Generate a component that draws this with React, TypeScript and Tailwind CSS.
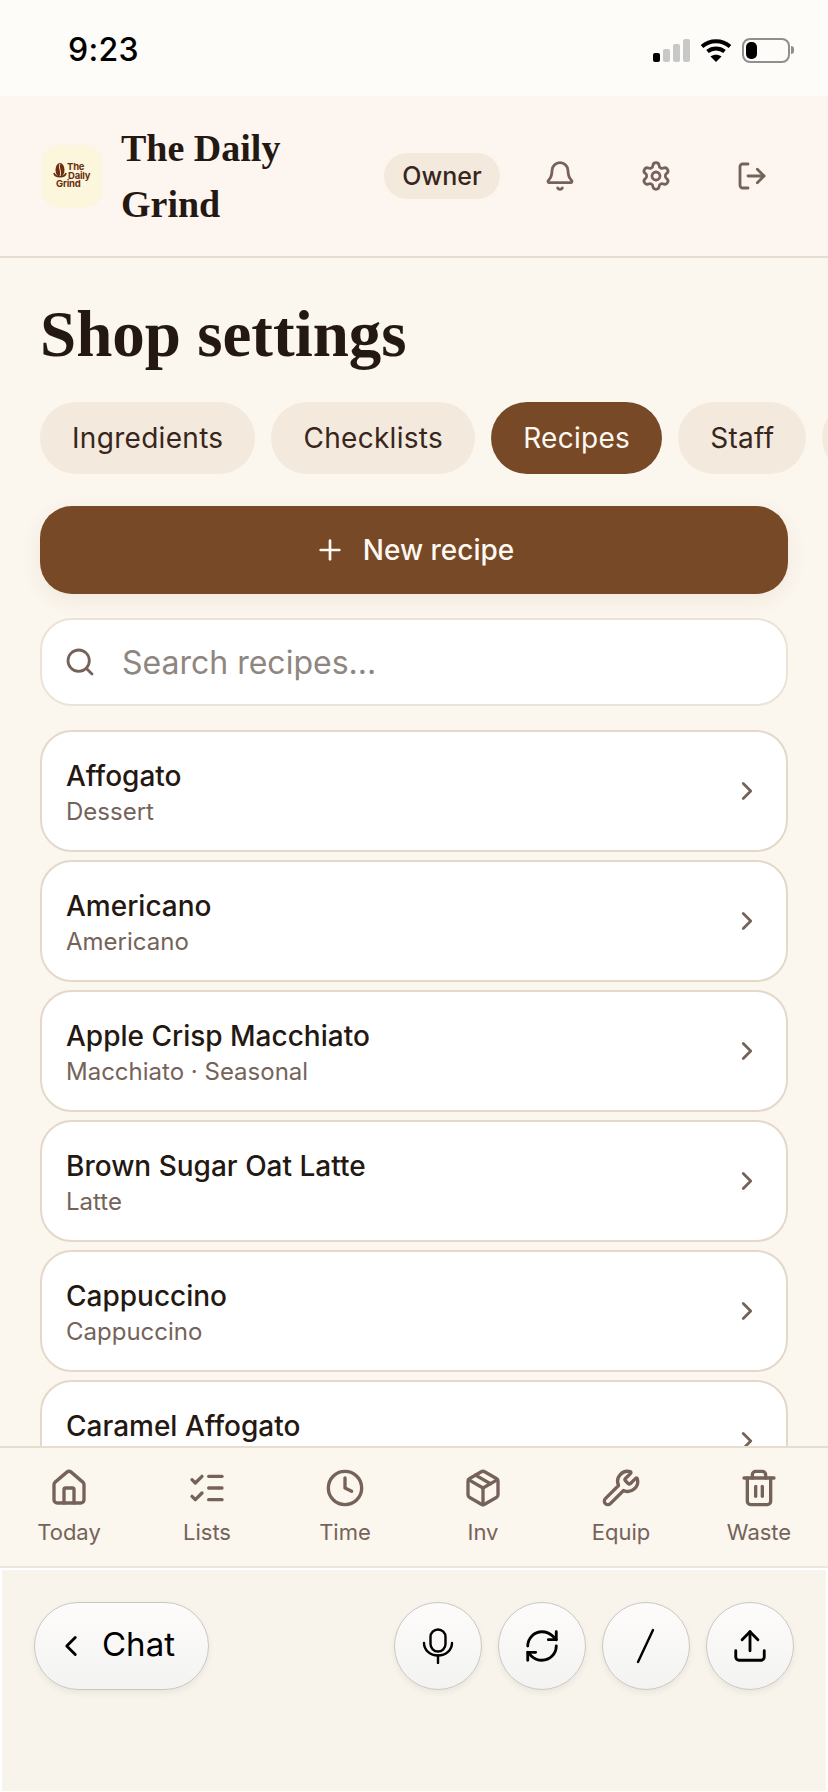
import {
  Bell,
  ChevronLeft,
  ChevronRight,
  Clock,
  House,
  ListChecks,
  LogOut,
  Package,
  Plus,
  RefreshCw,
  Search,
  Settings,
  Trash2,
  Upload,
  Wrench,
} from "lucide-react";

const tabs = ["Ingredients", "Checklists", "Recipes", "Staff"];

const recipes = [
  { name: "Affogato", sub: "Dessert" },
  { name: "Americano", sub: "Americano" },
  { name: "Apple Crisp Macchiato", sub: "Macchiato · Seasonal" },
  { name: "Brown Sugar Oat Latte", sub: "Latte" },
  { name: "Cappuccino", sub: "Cappuccino" },
  { name: "Caramel Affogato", sub: "" },
];

const navItems = [
  { label: "Today", icon: House },
  { label: "Lists", icon: ListChecks },
  { label: "Time", icon: Clock },
  { label: "Inv", icon: Package },
  { label: "Equip", icon: Wrench },
  { label: "Waste", icon: Trash2 },
];

const StatusIcons = () => (
  <div className="flex items-center gap-[10px]">
    {/* Signal */}
    <div className="flex items-end gap-[3px]">
      <div className="w-[7px] h-[9px] rounded-[2px] bg-black" />
      <div className="w-[7px] h-[13px] rounded-[2px] bg-[#c8c8c6]" />
      <div className="w-[7px] h-[18px] rounded-[2px] bg-[#c8c8c6]" />
      <div className="w-[7px] h-[23px] rounded-[2px] bg-[#c8c8c6]" />
    </div>
    {/* Wifi */}
    <svg width="32" height="24" viewBox="0 0 32 24" fill="none">
      <path d="M2 8.5C10 1.5 22 1.5 30 8.5" stroke="black" strokeWidth="4" />
      <path d="M7.5 13.5C12.5 9.5 19.5 9.5 24.5 13.5" stroke="black" strokeWidth="4" />
      <path d="M16 24L10.5 18.5C13.5 16 18.5 16 21.5 18.5Z" fill="black" />
    </svg>
    {/* Battery */}
    <div className="flex items-center gap-[1px]">
      <div className="w-[48px] h-[25px] rounded-[8px] border-2 border-[#8f8f8d] p-[2px]">
        <div className="w-[11px] h-full rounded-[5px] bg-black" />
      </div>
      <div className="w-[3px] h-[8px] rounded-r-full bg-[#8f8f8d]" />
    </div>
  </div>
);

const Logo = () => (
  <div className="w-[62px] h-[63px] shrink-0 rounded-[19px] bg-[#fbf6dc] flex items-center justify-center">
    <div className="relative w-[38px] h-[26px] text-[#6b2e0e]">
      <svg className="absolute left-0 top-0" width="14" height="18" viewBox="0 0 14 18">
        <ellipse cx="7" cy="7" rx="4.5" ry="7" fill="currentColor" />
        <path d="M7 1C5 4 9 9 7 13" stroke="#fbf6dc" strokeWidth="1" fill="none" />
        <path d="M1 10C2 15 12 15 13 10" stroke="currentColor" strokeWidth="1.6" fill="none" />
      </svg>
      <div className="absolute inset-0 text-[9.5px] leading-[8.7px] font-bold tracking-[-0.2px]">
        <div className="pl-[14px]">The</div>
        <div className="pl-[15px]">Daily</div>
        <div className="pl-[3px]">Grind</div>
      </div>
    </div>
  </div>
);

const IconButton = ({ children }: { children: React.ReactNode }) => (
  <button type="button" className="w-[96px] flex items-center justify-center text-[#75635a]">
    {children}
  </button>
);

const GlassButton = ({ children, className = "" }: { children: React.ReactNode; className?: string }) => (
  <button
    type="button"
    className={`h-[88px] flex items-center justify-center rounded-full border border-[#c9c7c3] bg-gradient-to-b from-[#fdfcfa] to-[#f3f3f1] text-black shadow-[0_3px_6px_rgba(0,0,0,0.06)] ${className}`}
  >
    {children}
  </button>
);

const RecipeRow = ({ name, sub }: { name: string; sub: string }) => (
  <div className="h-[122px] shrink-0 flex items-center justify-between pl-[24px] pr-[24px] bg-white rounded-[32px] border-2 border-[#e3d8ca]">
    <div className="pt-[3px]">
      <div className="text-[28px] leading-[38px] font-medium text-[#241812]">{name}</div>
      <div className="mt-[1px] min-h-[32px] text-[24px] leading-[32px] text-[#75635a]">{sub}</div>
    </div>
    <ChevronRight className="w-[30px] h-[30px] text-[#75635a]" strokeWidth={2.2} />
  </div>
);

export default function App() {
  return (
    <div
      className="w-[828px] h-[1792px] flex flex-col overflow-hidden bg-[#fbf6ee]"
      style={{ fontFamily: "Inter, sans-serif" }}
    >
      {/* Status bar */}
      <div className="h-[96px] shrink-0 flex items-center justify-between pl-[68px] pr-[34px] pt-[4px] bg-[#fefcf8]">
        <span className="text-[32px] font-medium text-black tracking-[0.3px]">9:23</span>
        <StatusIcons />
      </div>

      {/* Header */}
      <header className="h-[162px] shrink-0 flex items-center justify-between pl-[41px] pr-[28px] bg-[#fdf5ef] border-b-2 border-[#e6dccf]">
        <div className="flex items-center gap-[18px]">
          <Logo />
          <h1
            className="w-[190px] text-[38px] leading-[56px] font-bold text-[#241812]"
            style={{ fontFamily: "'Liberation Serif', serif" }}
          >
            The Daily Grind
          </h1>
        </div>
        <div className="flex items-center">
          <span className="h-[46px] w-[116px] mr-[12px] pt-[2px] flex items-center justify-center rounded-full bg-[#f3eadd] text-[25px] font-medium text-[#38261c]">
            Owner
          </span>
          <IconButton>
            <Bell className="w-[32px] h-[32px]" strokeWidth={2.1} />
          </IconButton>
          <IconButton>
            <Settings className="w-[32px] h-[32px]" strokeWidth={2.1} />
          </IconButton>
          <IconButton>
            <LogOut className="w-[32px] h-[32px]" strokeWidth={2.1} />
          </IconButton>
        </div>
      </header>

      {/* Content */}
      <main className="flex-1 min-h-0 overflow-hidden flex flex-col pt-[38px]">
        <h2
          className="shrink-0 px-[40px] text-[65px] leading-[76px] font-bold text-[#241812]"
          style={{ fontFamily: "'Liberation Serif', serif" }}
        >
          Shop settings
        </h2>

        <div className="mt-[30px] shrink-0 pl-[40px] flex gap-[16px] overflow-hidden">
          {tabs.map((tab) => (
            <div
              key={tab}
              className={`h-[72px] shrink-0 px-[32px] flex items-center rounded-full text-[28px] tracking-[0.3px] ${
                tab === "Recipes" ? "bg-[#774926] text-[#fdf8f2]" : "bg-[#f3eadd] text-[#38261c]"
              }`}
            >
              {tab}
            </div>
          ))}
          {/* next tab, cut off by the edge */}
          <div className="h-[72px] w-[100px] shrink-0 rounded-full bg-[#f3eadd]" />
        </div>

        <button
          type="button"
          className="mt-[32px] mx-[40px] h-[88px] shrink-0 flex items-center justify-center gap-[17px] rounded-[32px] bg-[#774926] text-[#fdf8f2] text-[28px] font-medium shadow-[0_6px_20px_rgba(119,73,38,0.08)]"
        >
          <Plus className="w-[32px] h-[32px]" strokeWidth={2} />
          New recipe
        </button>

        <div className="mt-[24px] mx-[40px] h-[88px] shrink-0 flex items-center gap-[26px] pl-[22px] bg-white rounded-[32px] border-2 border-[#ece3d8]">
          <Search className="w-[32px] h-[32px] text-[#75635a]" strokeWidth={2.1} />
          <span className="pt-[2px] text-[32px] text-[#8f8680]">Search recipes...</span>
        </div>

        <div className="mt-[24px] mx-[40px] shrink-0 flex flex-col gap-[8px]">
          {recipes.map((recipe) => (
            <RecipeRow key={recipe.name} name={recipe.name} sub={recipe.sub} />
          ))}
        </div>
      </main>

      {/* Bottom nav */}
      <nav className="h-[122px] shrink-0 grid grid-cols-6 pt-[20px] bg-[#fbf6ee] border-y-2 border-[#e6dccf] border-b-[#ebe6df]">
        {navItems.map((item) => (
          <div key={item.label} className="flex flex-col items-center text-[#75635a]">
            <item.icon className="w-[40px] h-[40px]" strokeWidth={2} />
            <span className="mt-[9px] text-[22px] leading-[30px]">{item.label}</span>
          </div>
        ))}
      </nav>

      {/* Browser toolbar */}
      <div className="h-[224px] shrink-0 bg-white px-[2px] pt-[2px] pb-[1px]">
        <div className="h-full flex items-start justify-between pl-[32px] pr-[32px] pt-[32px] bg-[#f8f4ec]">
          <GlassButton className="w-[175px] gap-[14px] text-[33px]">
            <ChevronLeft className="w-[34px] h-[34px]" strokeWidth={2} />
            <span className="pr-[14px] pb-[3px]">Chat</span>
          </GlassButton>
          <div className="flex gap-[16px]">
            <GlassButton className="w-[88px]">
              <svg width="32" height="36" viewBox="0 0 32 36" fill="none" stroke="black" strokeWidth="2.4" strokeLinecap="round">
                <rect x="8.5" y="1.5" width="15" height="22" rx="7.5" />
                <path d="M2 15C2 22 8 27.5 16 27.5C24 27.5 30 22 30 15" />
                <path d="M16 27.5V35" />
              </svg>
            </GlassButton>
            <GlassButton className="w-[88px]">
              <RefreshCw className="w-[38px] h-[38px]" strokeWidth={1.8} />
            </GlassButton>
            <GlassButton className="w-[88px]">
              <svg width="36" height="36" viewBox="0 0 36 36" fill="none">
                <path d="M25 2L10 34" stroke="black" strokeWidth="2.4" strokeLinecap="round" />
              </svg>
            </GlassButton>
            <GlassButton className="w-[88px]">
              <Upload className="w-[38px] h-[38px]" strokeWidth={1.8} />
            </GlassButton>
          </div>
        </div>
      </div>
    </div>
  );
}
